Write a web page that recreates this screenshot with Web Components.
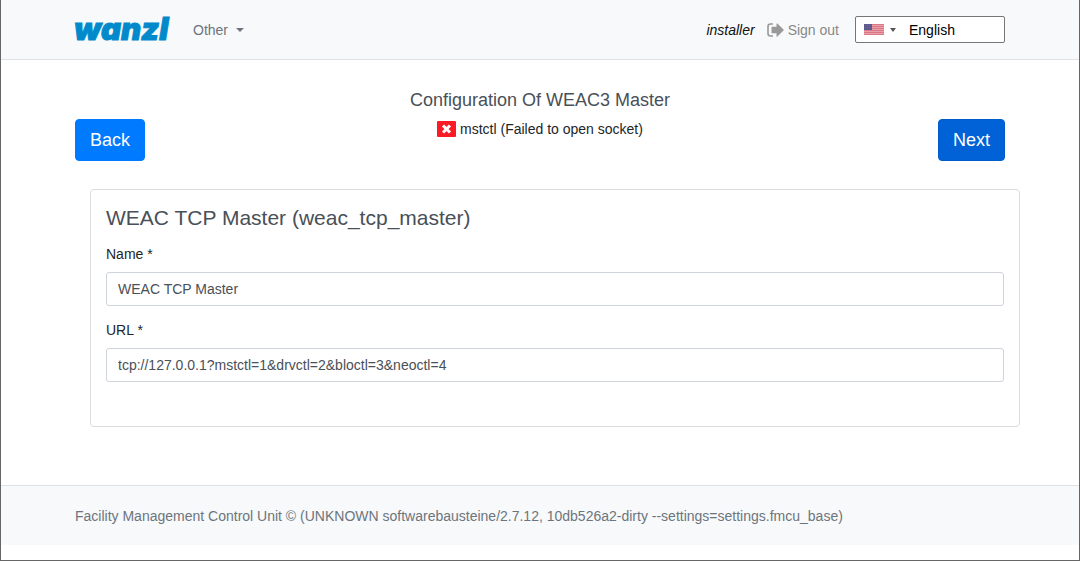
<!DOCTYPE html>
<html lang="en">
<head>
<meta charset="utf-8">
<meta name="viewport" content="width=device-width, initial-scale=1">
<title>Configuration Of WEAC3 Master</title>
<style>
  * { box-sizing: border-box; }
  body {
    margin: 0;
    min-height: 100vh;
    border: 1px solid #666;
    border-top: 0;
    background: #fff;
    color: #212529;
    font: 14px/20px "Liberation Sans", Arial, sans-serif;
    --container-width: 960px;
    --gutter: 15px;
    --muted: #6c757d;
    --bar-bg: #f8f9fa;
    --bar-border: #dee2e6;
  }
</style>
</head>
<body>
<fmcu-navbar>
  <fmcu-brand></fmcu-brand>
  <fmcu-nav-dropdown>Other</fmcu-nav-dropdown>
  <fmcu-user slot="end" name="installer"></fmcu-user>
  <fmcu-language slot="end" value="English"></fmcu-language>
</fmcu-navbar>

<fmcu-page heading="Configuration Of WEAC3 Master">
  <fmcu-button slot="actions">Back</fmcu-button>
  <fmcu-status slot="actions">mstctl (Failed to open socket)</fmcu-status>
  <fmcu-button slot="actions" active>Next</fmcu-button>
  <fmcu-card heading="WEAC TCP Master (weac_tcp_master)">
    <fmcu-field label="Name *" name="name" value="WEAC TCP Master"></fmcu-field>
    <fmcu-field label="URL *" name="url" value="tcp://127.0.0.1?mstctl=1&amp;drvctl=2&amp;bloctl=3&amp;neoctl=4"></fmcu-field>
  </fmcu-card>
</fmcu-page>

<fmcu-footer>Facility Management Control Unit © (UNKNOWN softwarebausteine/2.7.12, 10db526a2-dirty --settings=settings.fmcu_base)</fmcu-footer>

<script>
class FmcuElement extends HTMLElement {
  constructor() {
    super();
    this.attachShadow({ mode: "open" });
  }

  connectedCallback() {
    this.shadowRoot.innerHTML = `
      <style>
        * { box-sizing: border-box; }
        :host { display: block; box-sizing: border-box; }
        .container {
          max-width: var(--container-width);
          margin: 0 auto;
          padding: 0 var(--gutter);
        }
      </style>
      ${this.render()}
    `;
  }
}

class FmcuNavbar extends FmcuElement {
  render() {
    return `
      <style>
        :host { background: var(--bar-bg); border-bottom: 1px solid var(--bar-border); }
        .container, nav, .end { display: flex; align-items: center; }
        .container { min-height: 59px; justify-content: space-between; }
        nav { gap: 20px; }
        .end { gap: 16px; }
      </style>
      <header class="container">
        <nav><slot></slot></nav>
        <div class="end"><slot name="end"></slot></div>
      </header>
    `;
  }
}

class FmcuBrand extends FmcuElement {
  render() {
    return `
      <style>
        a { display: block; text-decoration: none; }
        svg { display: block; overflow: visible; }
        text {
          font: italic 900 31px Inter, "Liberation Sans", sans-serif;
          fill: #008acb;
          stroke: #008acb;
          stroke-width: 1px;
        }
      </style>
      <a href="#" aria-label="wanzl">
        <svg width="98" height="22" viewBox="0 0 98 22"><text x="-1" y="21">wanzl</text></svg>
      </a>
    `;
  }
}

class FmcuNavDropdown extends FmcuElement {
  render() {
    return `
      <style>
        button {
          display: flex;
          align-items: center;
          gap: 8px;
          padding: 0;
          border: 0;
          background: none;
          color: var(--muted);
          font: inherit;
          cursor: pointer;
        }
        .caret { border: 4px solid transparent; border-top-color: currentColor; border-bottom: 0; }
      </style>
      <button type="button" aria-haspopup="true"><slot></slot><span class="caret"></span></button>
    `;
  }
}

class FmcuUser extends FmcuElement {
  render() {
    return `
      <style>
        :host, a { display: flex; align-items: center; }
        :host { gap: 12px; }
        em { color: #111; }
        a { gap: 4px; color: #888; text-decoration: none; }
        svg { display: block; }
      </style>
      <em>${this.getAttribute("name")}</em>
      <a href="#">
        <svg width="17" height="14" viewBox="0 0 17 14" aria-hidden="true">
          <path d="M6 1H3.500Q1 1 1 3.500V10.500Q1 13 3.500 13H6" fill="none" stroke="#999" stroke-width="1.600"/>
          <path d="M5 3.800H9.500V1Q9.500 0 10.400 .6L16.500 6.400Q17 7 16.500 7.600L10.400 13.400Q9.500 14 9.500 13V10.200H5Q4.500 10.200 4.500 9.700V4.300Q4.500 3.800 5 3.800Z" fill="#999"/>
        </svg>
        Sign out
      </a>
    `;
  }
}

class FmcuLanguage extends FmcuElement {
  render() {
    return `
      <style>
        .box {
          display: flex;
          width: 150px;
          height: 27px;
          border: 1px solid #767676;
          border-radius: 2px;
          background: #fff;
        }
        button {
          display: flex;
          flex: none;
          align-items: center;
          gap: 6px;
          padding: 0 8px;
          border: 0;
          background: none;
          cursor: pointer;
        }
        .caret { border: 3px solid transparent; border-top: 4px solid #555; border-bottom: 0; }
        svg { display: block; }
        input {
          flex: 1;
          min-width: 0;
          padding: 0 5px;
          border: 0;
          outline: 0;
          background: none;
          color: #000;
          font: inherit;
        }
      </style>
      <div class="box">
        <button type="button" aria-label="Choose language">
          <svg width="20" height="11" viewBox="0 0 20 11" aria-hidden="true">
            <path fill="#e8a0aa" d="M0 0h20v11H0z"/>
            <path stroke="#dc7885" stroke-width="1" d="M0 .5h20M0 2.500h20M0 4.500h20M0 6.500h20M0 8.500h20M0 10.500h20"/>
            <path fill="#5d5a8c" d="M0 0h8v6H0z"/>
            <path stroke="#6c699a" stroke-dasharray="1 1" d="M1 1.500h6M1 3.500h6"/>
          </svg>
          <span class="caret"></span>
        </button>
        <input type="text" aria-label="Language" value="${this.getAttribute("value")}">
      </div>
    `;
  }
}

class FmcuPage extends FmcuElement {
  render() {
    return `
      <style>
        .container { padding-top: 29px; padding-bottom: 58px; }
        h1 {
          margin: 0 0 8px;
          color: #495057;
          font-size: 18px;
          font-weight: 400;
          line-height: 22px;
          text-align: center;
        }
        .actions {
          display: grid;
          grid-template-columns: 1fr auto 1fr;
          align-items: start;
          margin-bottom: 28px;
        }
        .actions ::slotted(:first-child) { justify-self: start; }
        .actions ::slotted([active]) { justify-self: end; }
        .content { margin-left: var(--gutter); margin-right: calc(-1 * var(--gutter)); }
      </style>
      <main class="container">
        <h1>${this.getAttribute("heading")}</h1>
        <div class="actions"><slot name="actions"></slot></div>
        <div class="content"><slot></slot></div>
      </main>
    `;
  }
}

class FmcuButton extends FmcuElement {
  render() {
    return `
      <style>
        button {
          display: block;
          height: 42px;
          padding: 0 14px;
          border: 1px solid #007bff;
          border-radius: 4px;
          background: #007bff;
          color: #fff;
          font: inherit;
          font-size: 18px;
          cursor: pointer;
        }
        :host([active]) button { background: #0062d6; border-color: #005cc8; }
      </style>
      <button type="button"><slot></slot></button>
    `;
  }
}

class FmcuStatus extends FmcuElement {
  render() {
    return `
      <style>
        :host { display: flex; align-items: center; gap: 4px; }
        svg { display: block; }
      </style>
      <svg width="19" height="16" viewBox="0 0 19 16" aria-hidden="true">
        <rect width="19" height="16" rx="1" fill="#fb1b25"/>
        <path d="M6 4.500L13 11.500M13 4.500L6 11.500" stroke="#fff" stroke-width="3"/>
      </svg>
      <slot></slot>
    `;
  }
}

class FmcuCard extends FmcuElement {
  render() {
    return `
      <style>
        section { padding: 16px 15px 44px; border: 1px solid #dcdcdc; border-radius: 4px; }
        h2 {
          margin: 0 0 14px;
          color: #495057;
          font-size: 21px;
          font-weight: 400;
          line-height: 24px;
        }
        .fields { display: grid; gap: 14px; }
      </style>
      <section>
        <h2>${this.getAttribute("heading")}</h2>
        <div class="fields"><slot></slot></div>
      </section>
    `;
  }
}

class FmcuField extends FmcuElement {
  render() {
    const name = this.getAttribute("name");
    return `
      <style>
        label { display: block; margin-bottom: 8px; }
        input {
          display: block;
          width: 100%;
          height: 34px;
          padding: 0 11px;
          border: 1px solid #ced4da;
          border-radius: 3px;
          background: #fff;
          color: #495057;
          font: inherit;
        }
      </style>
      <label for="${name}">${this.getAttribute("label")}</label>
      <input type="text" id="${name}" name="${name}">
    `;
  }

  connectedCallback() {
    super.connectedCallback();
    this.shadowRoot.querySelector("input").value = this.getAttribute("value");
  }
}

class FmcuFooter extends FmcuElement {
  render() {
    return `
      <style>
        :host { background: var(--bar-bg); border-top: 1px solid var(--bar-border); color: var(--muted); }
        .container { padding-top: 20px; padding-bottom: 19px; }
      </style>
      <footer class="container"><slot></slot></footer>
    `;
  }
}

customElements.define("fmcu-navbar", FmcuNavbar);
customElements.define("fmcu-brand", FmcuBrand);
customElements.define("fmcu-nav-dropdown", FmcuNavDropdown);
customElements.define("fmcu-user", FmcuUser);
customElements.define("fmcu-language", FmcuLanguage);
customElements.define("fmcu-page", FmcuPage);
customElements.define("fmcu-button", FmcuButton);
customElements.define("fmcu-status", FmcuStatus);
customElements.define("fmcu-card", FmcuCard);
customElements.define("fmcu-field", FmcuField);
customElements.define("fmcu-footer", FmcuFooter);
</script>
</body>
</html>
